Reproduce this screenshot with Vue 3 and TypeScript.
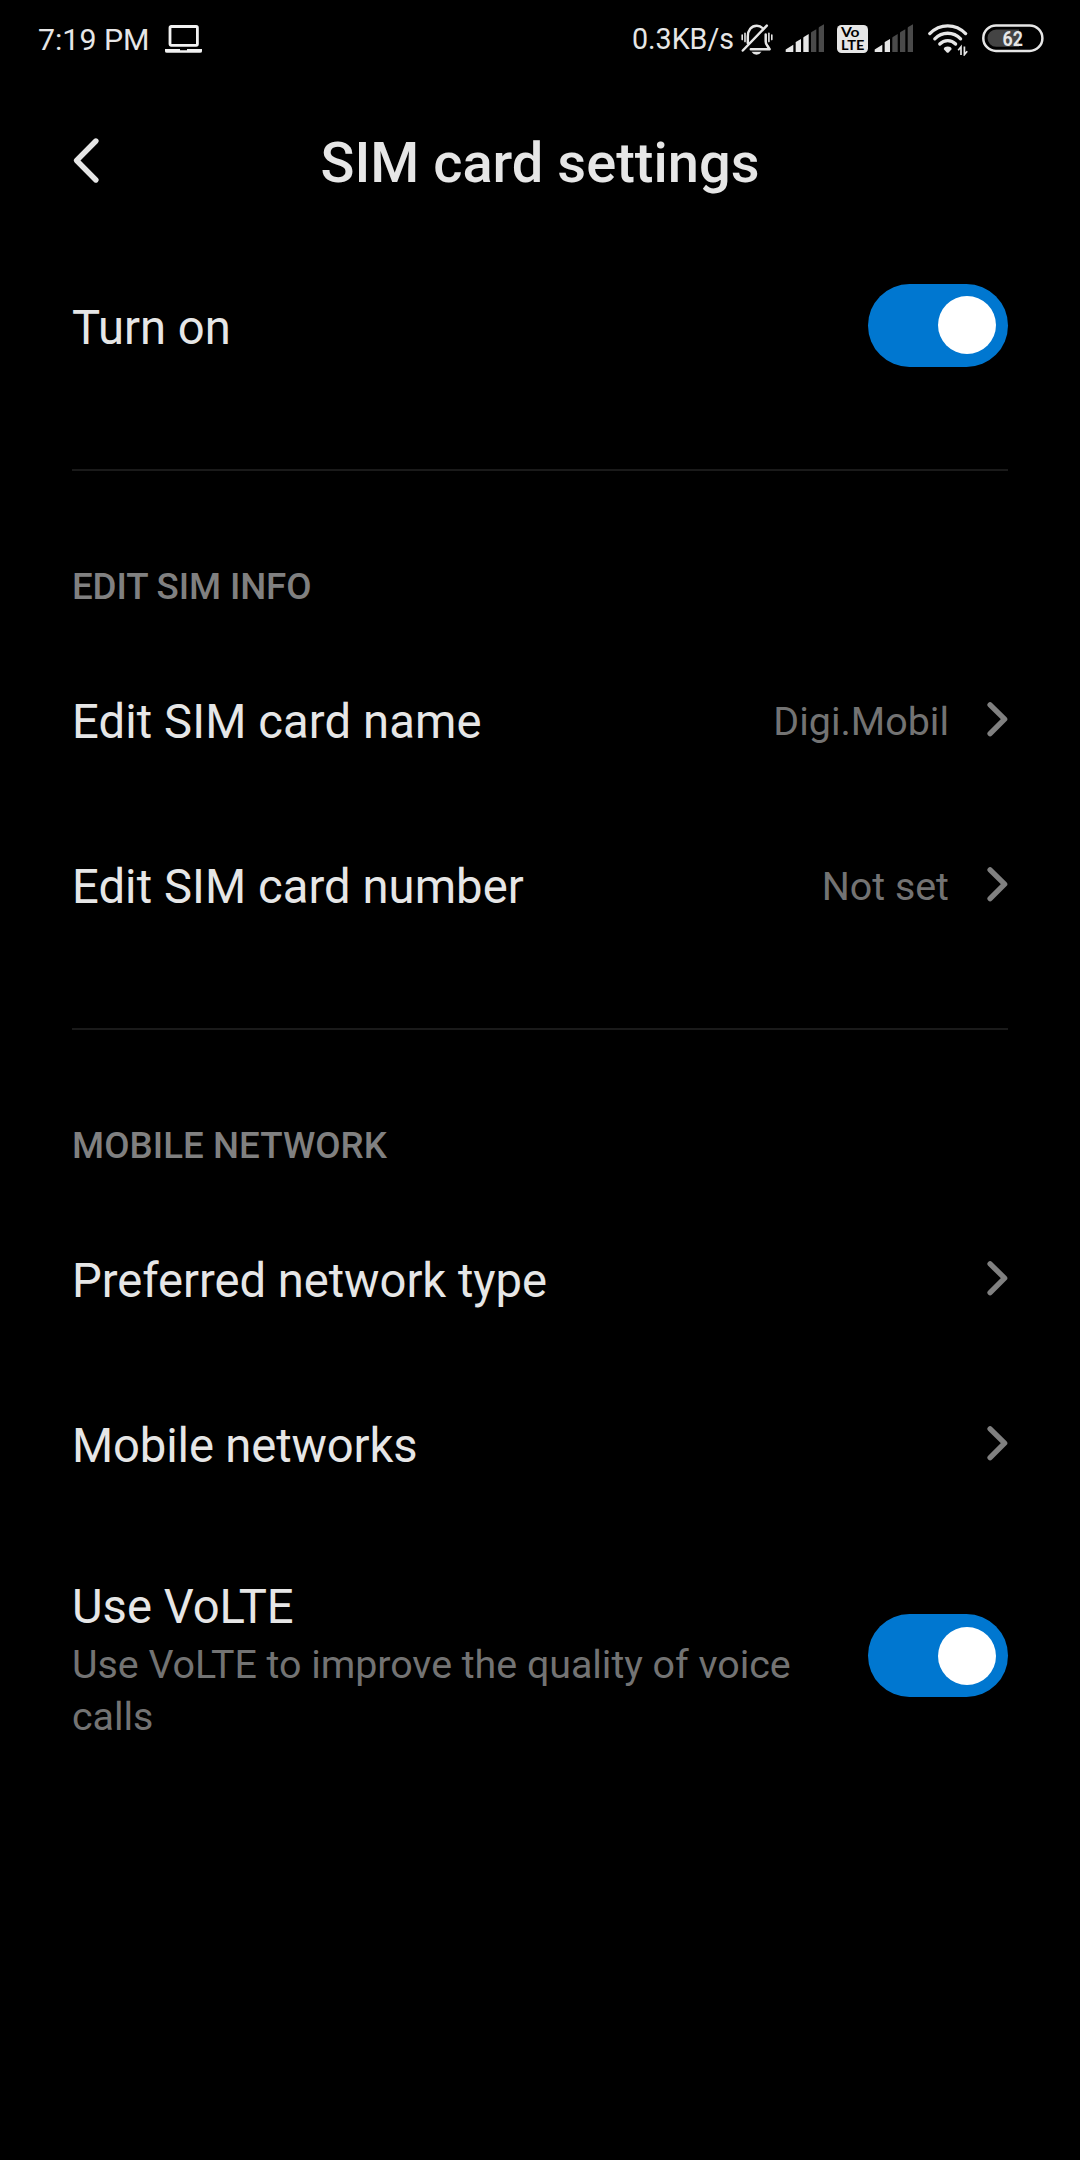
<script setup lang="ts">
interface LinkRow {
  label: string
  value?: string
  tracking: number
}

interface Section {
  title: string
  tracking: number
  rows: LinkRow[]
}

const sections: Section[] = [
  {
    title: 'EDIT SIM INFO',
    tracking: -0.12,
    rows: [
      { label: 'Edit SIM card name', value: 'Digi.Mobil', tracking: 0.1 },
      { label: 'Edit SIM card number', value: 'Not set', tracking: 0.06 },
    ],
  },
  {
    title: 'MOBILE NETWORK',
    tracking: 0.06,
    rows: [
      { label: 'Preferred network type', tracking: -0.04 },
      { label: 'Mobile networks', tracking: -0.13 },
    ],
  },
]

// Five signal bars cut off by one diagonal top edge
const bars = [
  'M.7 28V25.4L8.3 20.8V28Z',
  'M10.7 28V18.6Q10.7 18 11.2 17.7L16 14.9V28Z',
  'M18.3 28V13.8Q18.3 13.2 18.8 12.9L23.7 10.1V28Z',
  'M26 28V9Q26 8.4 26.5 8.1L31.3 5.3V28Z',
  'M33.7 28V4Q33.7 3.4 34.2 3.1L39 .3V28Z',
]
</script>

<template>
  <main class="screen">
    <div class="status">
      <span class="time">7:19 PM</span>
      <svg class="laptop" width="38" height="32" viewBox="0 0 38 32">
        <rect x="5" y="2.5" width="27.4" height="18.8" rx="1.2" fill="none" stroke="#f2f2f2" stroke-width="2.8" />
        <path d="M0 25H15V26.3H22V25H37V27.2Q37 28.8 35 28.8H2Q0 28.8 0 27.2Z" fill="#f2f2f2" />
      </svg>
      <span class="speed">0.3KB/s</span>
      <svg class="bell" width="32" height="32" viewBox="0 0 32 32" fill="none" stroke="#e6e6e6" stroke-width="2.5" stroke-linecap="round">
        <path d="M6.8 19V12.5C6.8 6.2 10.3 1.8 15.8 1.8C18 1.8 20 2.5 21.4 4" />
        <path d="M24.7 10.5V17.5Q24.7 20 26.4 21.8L28.6 25.2H9.8" stroke-linejoin="round" />
        <path d="M1.8 26.5L25.8 1.6" stroke-width="2.5" />
        <path d="M10.5 27.8H20.5Q18.6 30.8 15.5 30.8T10.5 27.8Z" fill="#e6e6e6" stroke="none" />
        <path d="M4 9.2V17.6M1.2 11V15.6M27.9 9.2V17.6M30.8 11V15.6" stroke-width="1.6" />
      </svg>
      <svg class="signal first" width="40" height="32" viewBox="0 0 40 32">
        <path v-for="(bar, i) in bars" :key="i" :d="bar" :fill="i < 3 ? '#e6e6e6' : '#4a4a4a'" />
      </svg>
      <svg class="volte" width="32" height="32" viewBox="0 0 32 32">
        <rect y="1" width="31" height="28" rx="4.5" fill="#e6e6e6" />
        <text x="4" y="13.3" textLength="18.6" lengthAdjust="spacingAndGlyphs">Vo</text>
        <text x="3.9" y="26" textLength="23.4" lengthAdjust="spacingAndGlyphs">LTE</text>
      </svg>
      <svg class="signal second" width="40" height="32" viewBox="0 0 40 32">
        <path v-for="(bar, i) in bars" :key="i" :d="bar" :fill="i < 2 ? '#e6e6e6' : '#4a4a4a'" />
      </svg>
      <svg class="wifi" width="40" height="32" viewBox="0 0 40 32" fill="none" stroke="#e6e6e6" stroke-width="3.3" stroke-linecap="round">
        <path d="M1.8 9.6C11.8-.8 27.6-.8 37.6 9.6" />
        <path d="M6.8 14.8C14 7.4 25.4 7.4 32.6 14.8" />
        <path d="M11.8 20C16.2 15.5 23.2 15.5 27.6 20" />
        <path d="M15.8 25.2Q15.8 22.6 19.7 22.6T23.6 25.2L20.6 28.4Q19.7 29.2 18.8 28.4Z" fill="#e6e6e6" stroke="none" />
        <path d="M33 31V22.8L30.2 26.2M36.4 22.4V30.6L39.2 27.2" stroke-width="1.7" stroke-linecap="butt" />
      </svg>
      <svg class="battery" width="62" height="32" viewBox="0 0 62 32">
        <rect x="1.3" y="1.5" width="59.1" height="25.4" rx="12.7" fill="none" stroke="#e6e6e6" stroke-width="2.5" />
        <path d="M14.2 5.4H37V22.8H14.2A8.7 8.7 0 0 1 14.2 5.4Z" fill="#444" />
        <text x="20.6" y="21.5" textLength="20.4" lengthAdjust="spacingAndGlyphs">62</text>
      </svg>
    </div>

    <header class="bar">
      <svg class="back" width="30" height="48" viewBox="0 0 30 48">
        <path d="M23.9 5L4.6 24.5L23.9 44" fill="none" stroke="#e6e6e6" stroke-width="5.4" stroke-linecap="round" stroke-linejoin="round" />
      </svg>
      <h1>SIM card settings</h1>
    </header>

    <div class="row">
      <span class="label">Turn on</span>
      <span class="toggle"><i class="knob"></i></span>
    </div>

    <section v-for="s in sections" :key="s.title">
      <h2 :style="{ letterSpacing: s.tracking + 'px' }">{{ s.title }}</h2>
      <div v-for="r in s.rows" :key="r.label" class="row">
        <span class="label" :style="{ letterSpacing: r.tracking + 'px' }">{{ r.label }}</span>
        <span v-if="r.value" class="value">{{ r.value }}</span>
        <svg class="chevron" width="24" height="38" viewBox="0 0 24 38">
          <path d="M6.1 4.8L20.6 19.2L6.1 33.6" fill="none" stroke="#808080" stroke-width="5.4" stroke-linecap="round" stroke-linejoin="round" />
        </svg>
      </div>
    </section>

    <div class="row volte-row">
      <div class="copy">
        <div class="label">Use VoLTE</div>
        <p>Use VoLTE to improve the quality of voice calls</p>
      </div>
      <span class="toggle"><i class="knob"></i></span>
    </div>
  </main>
</template>

<style>
body {
  background: #000;
}
</style>

<style scoped>
.screen {
  box-sizing: border-box;
  width: 1080px;
  height: 2160px;
  overflow: hidden;
  background: #000;
  color: #e6e6e6;
  font-family: Roboto, sans-serif;
}
.screen svg {
  display: block;
  flex: none;
}
.status {
  display: flex;
  align-items: flex-start;
  box-sizing: border-box;
  height: 80px;
  padding: 24px 36px 0 38px;
}
.time {
  font-size: 30.3px;
  line-height: 32px;
  width: 127px;
}
.speed {
  margin-left: auto;
  margin-top: -1px;
  width: 109px;
  font-size: 28.6px;
  line-height: 32px;
}
.signal.first {
  margin-left: 12px;
}
.volte {
  margin-left: 12px;
}
.volte text {
  font: 700 12.6px Lato, sans-serif;
  fill: #000;
}
.signal.second {
  margin-left: 5px;
}
.wifi {
  margin-left: 14px;
}
.battery {
  margin-left: 14px;
}
.battery text {
  font: 700 21px Roboto, sans-serif;
  fill: #e6e6e6;
}
.bar {
  display: flex;
  align-items: center;
  height: 165px;
  padding: 0 72px;
}
.back {
  margin-top: -5px;
}
h1 {
  flex: 1;
  margin: 0;
  padding-right: 30px;
  font-size: 56px;
  font-weight: 500;
  line-height: 66px;
  text-align: center;
}
.row {
  display: flex;
  align-items: center;
  height: 165px;
  padding: 0 72px;
}
.label {
  font-size: 47.2px;
  line-height: 56px;
}
.value {
  margin-left: auto;
  font-size: 39.4px;
  line-height: 48px;
  color: #737373;
}
.chevron {
  margin: -5px 0 0 auto;
}
.value + .chevron {
  margin-left: 35px;
}
.toggle {
  display: flex;
  align-items: center;
  justify-content: flex-end;
  flex: none;
  box-sizing: border-box;
  width: 140px;
  height: 82.5px;
  margin: -4.5px 0 0 auto;
  padding-right: 12px;
  border-radius: 42px;
  background: #0077d0;
}
.knob {
  width: 58px;
  height: 58px;
  border-radius: 50%;
  background: #fff;
}
section {
  margin-top: 59px;
}
h2 {
  box-sizing: border-box;
  height: 170px;
  margin: 0 72px;
  padding-top: 94px;
  border-top: 2px solid #1a1a1a;
  color: #808080;
  font-size: 36.7px;
  font-weight: 500;
  line-height: 44px;
}
.volte-row {
  align-items: flex-start;
  height: 264px;
}
.copy {
  width: 740px;
  padding-top: 51px;
}
.copy p {
  margin: 4px 0 0;
  color: #737373;
  font-size: 39.4px;
  line-height: 52px;
  letter-spacing: -0.03px;
}
.volte-row .toggle {
  margin-top: 86.3px;
}
</style>
